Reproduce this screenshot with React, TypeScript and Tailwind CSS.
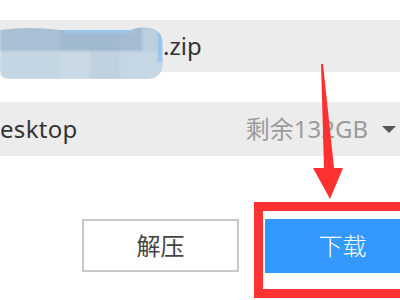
import React from "react";

const font = { fontFamily: "'Noto Sans','Noto Sans CJK SC',sans-serif" };

function Mosaic() {
  // blurred-out file name (mosaic blob)
  return (
    <svg width="163" height="54" viewBox="0 0 163 54" className="shrink-0 mt-[14px]">
      <defs>
        <clipPath id="blob">
          <path d="M0 4 Q30 0 60 4 L130 4 Q140 0 150 2 Q163 4 163 20 L163 40 Q160 54 145 53 L10 53 Q0 52 0 46 Z" />
        </clipPath>
        <filter id="soft">
          <feGaussianBlur stdDeviation="0.8" />
        </filter>
      </defs>
      <g clipPath="url(#blob)" filter="url(#soft)">
        <rect x="0" y="0" width="60" height="25" fill="#a9c0d4" />
        <rect x="60" y="0" width="60" height="25" fill="#a1b9ce" />
        <rect x="120" y="0" width="22" height="25" fill="#a4bbd0" />
        <rect x="142" y="0" width="21" height="25" fill="#bccfdf" />
        <rect x="65" y="2" width="68" height="5" fill="#9cc9ee" />
        <rect x="0" y="25" width="60" height="29" fill="#c4d5e3" />
        <rect x="60" y="25" width="30" height="29" fill="#c9dae6" />
        <rect x="90" y="25" width="30" height="29" fill="#c0d2e0" />
        <rect x="120" y="25" width="43" height="29" fill="#c5d6e4" />
        <rect x="158" y="6" width="4" height="30" fill="#8fc3ef" />
      </g>
    </svg>
  );
}

export default function App() {
  return (
    <div className="relative w-[400px] h-[300px] overflow-hidden bg-white text-[#333]" style={font}>
      <div className="pt-[20px]">
        {/* file name row */}
        <div className="flex items-center h-[52px] bg-[#ececec]">
          <Mosaic />
          <span className="text-[24px] leading-none -mt-[1px]">.zip</span>
        </div>

        {/* path row */}
        <div className="flex items-center justify-between h-[54px] mt-[30px] bg-[#ececec]">
          <span className="text-[24px] leading-none tracking-[0.3px]">esktop</span>
          <div className="flex items-center gap-[14px] pr-[4px]">
            <span className="text-[24px] leading-none text-[#9b9b9b]">剩余132GB</span>
            <span className="w-0 h-0 border-l-[7px] border-r-[7px] border-t-[7px] border-l-transparent border-r-transparent border-t-[#555]" />
          </div>
        </div>

        {/* buttons */}
        <div className="flex gap-[26px] mt-[63px] pl-[82px]">
          <button className="w-[157px] h-[53px] shrink-0 border-2 border-[#c8c8c8] bg-white text-[24px] text-[#444]">
            解压
          </button>
          <button className="w-[155px] h-[54px] shrink-0 bg-[#3399ff] text-[24px] font-light text-white">
            下载
          </button>
        </div>
      </div>

      {/* red highlight frame */}
      <div className="absolute left-[254px] top-[202px] w-[170px] h-[96px] border-[9px] border-[#ff3333]" />

      {/* red arrow */}
      <svg className="absolute left-0 top-0 pointer-events-none" width="400" height="300">
        <polygon
          points="321,64 323,64 334,168 343,168 330,199 313,168 324,168"
          fill="#ff3030"
        />
      </svg>
    </div>
  );
}
